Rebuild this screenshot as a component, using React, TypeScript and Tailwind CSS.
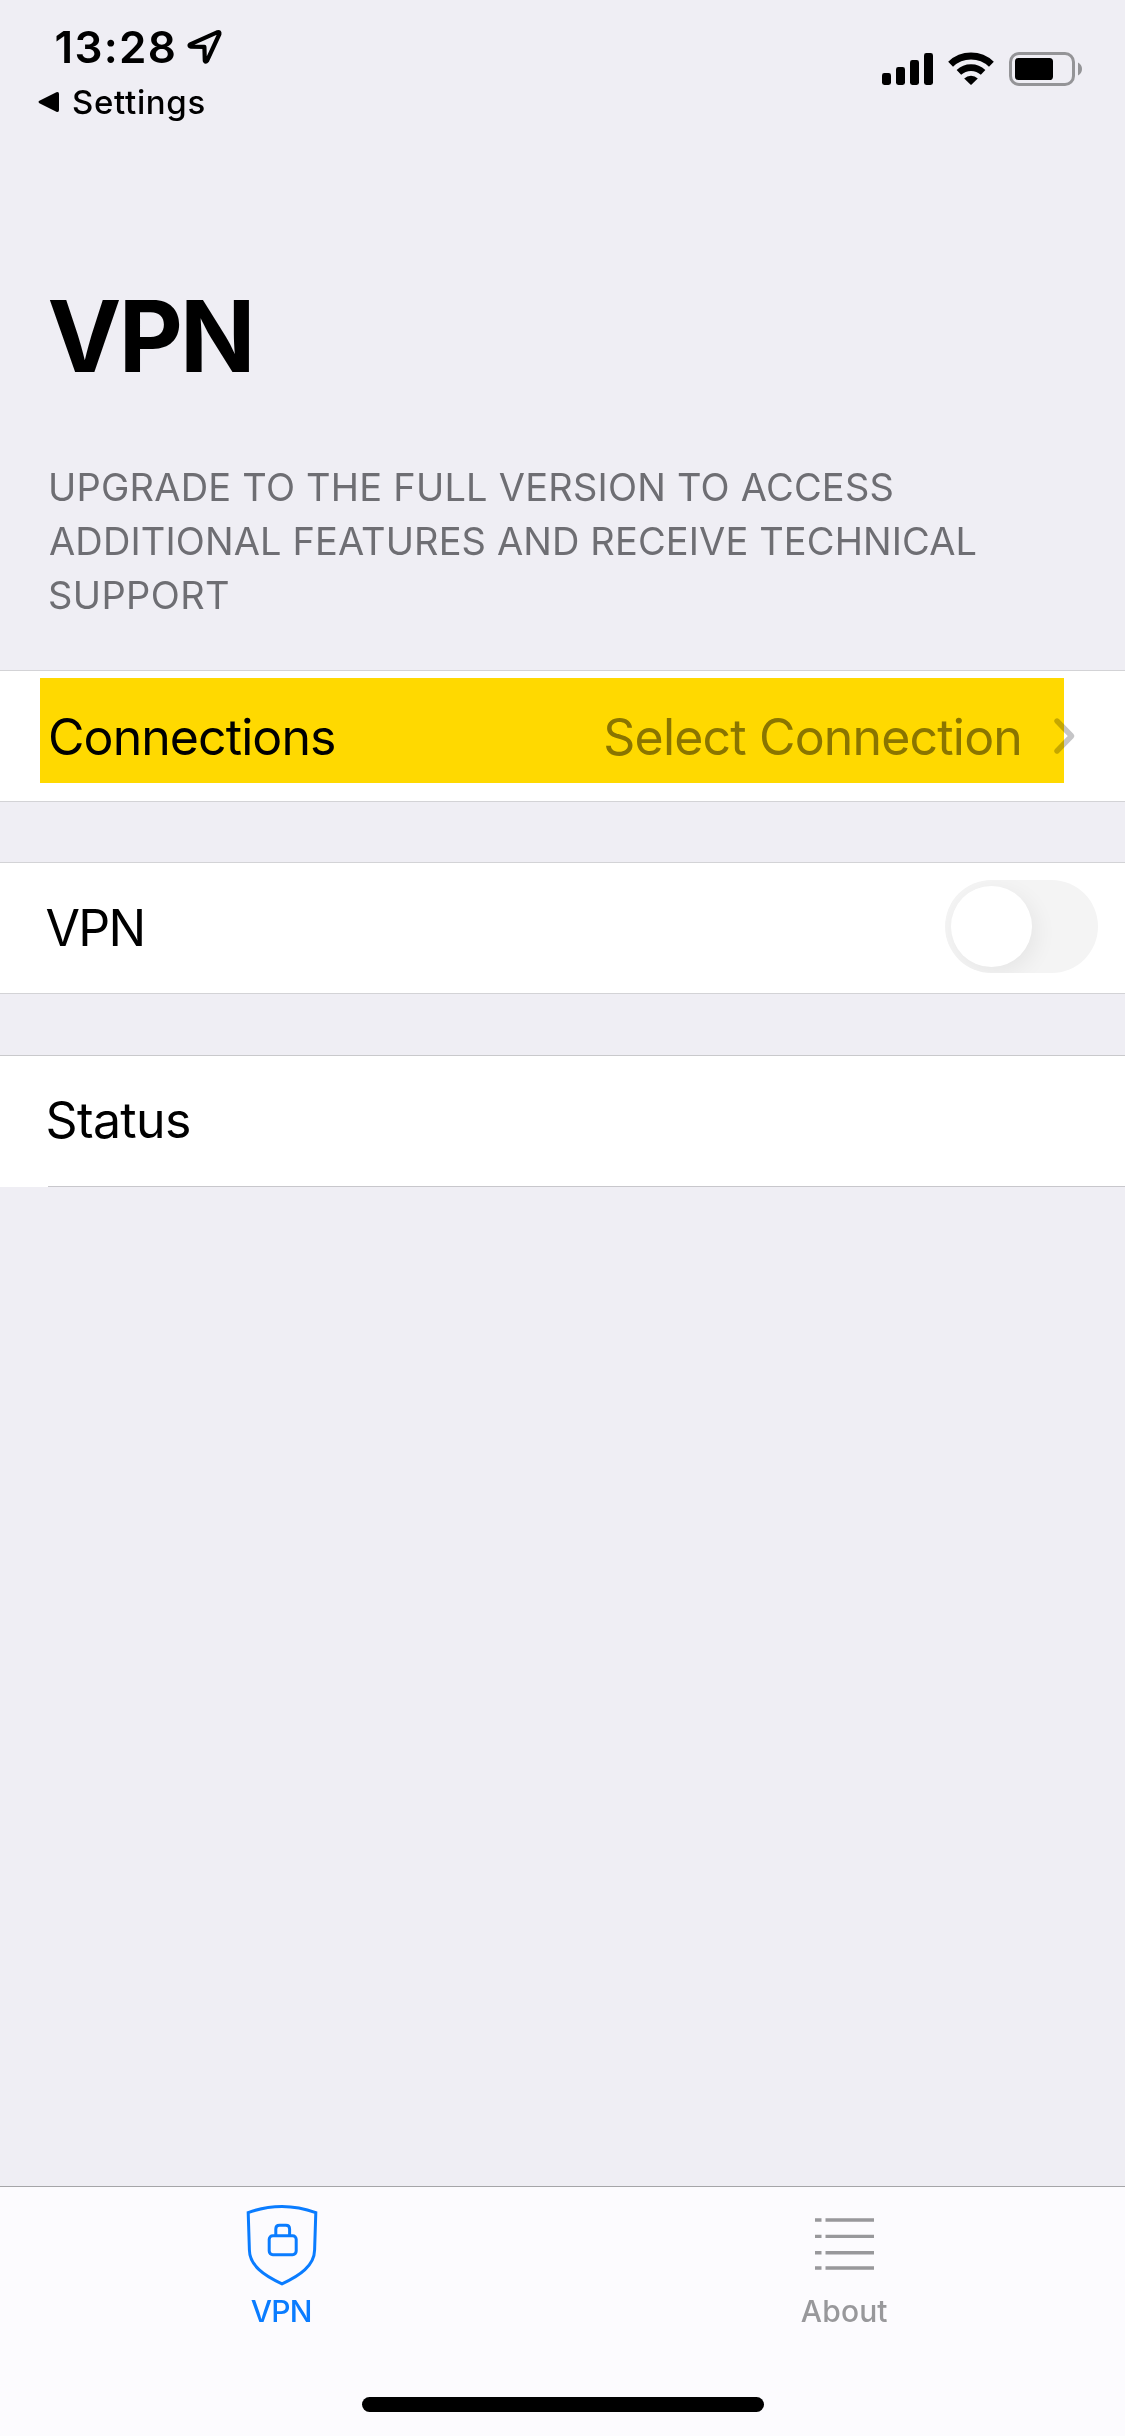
import type { ReactNode } from "react";

function LocationArrow() {
  return (
    <svg className="block" width="38" height="38" viewBox="0 0 38 38" fill="none">
      <path
        d="M31.6 4.2 L4.2 16.4 Q2.6 17.8 4.6 18.6 L18.4 18.8 L18.8 32.6 Q19.6 34.6 21 32.8 L33.4 6 Q33.8 3.4 31.6 4.2 Z"
        stroke="#000"
        strokeWidth="4.2"
        strokeLinejoin="round"
      />
    </svg>
  );
}

function SignalBars() {
  return (
    <svg className="block" width="51" height="34" viewBox="0 0 51 34">
      <rect x="0" y="21" width="9" height="12" rx="2.4" />
      <rect x="14" y="15" width="9" height="18" rx="2.4" />
      <rect x="28" y="8" width="9" height="25" rx="2.4" />
      <rect x="42" y="1" width="9" height="32" rx="2.4" />
    </svg>
  );
}

function Wifi() {
  return (
    <svg className="block" width="46" height="34" viewBox="0 0 46 34">
      <g fill="none" stroke="#000">
        <path d="M2.6 12.3 A29.5 29.5 0 0 1 43.4 12.3" strokeWidth="7" />
        <path d="M10.9 20.4 A17.6 17.6 0 0 1 35.1 20.4" strokeWidth="6.6" />
      </g>
      <path d="M16.2 26.4 A9.8 9.8 0 0 1 29.8 26.4 L23.6 32.6 Q23 33 22.4 32.6 Z" />
    </svg>
  );
}

function Battery() {
  return (
    <svg className="block" width="73" height="34" viewBox="0 0 73 34">
      <rect x="1.5" y="1.5" width="63" height="31" rx="8.5" fill="none" stroke="#949497" strokeWidth="3" />
      <rect x="6" y="6" width="38" height="22" rx="3.6" />
      <path d="M69 10.5 Q73 12.8 73 17 Q73 21.2 69 23.5 Z" fill="#949497" />
    </svg>
  );
}

function ShieldLock() {
  return (
    <svg className="block" width="72" height="82" viewBox="0 0 72 82" fill="none" stroke="#0a7cff" strokeWidth="3">
      <path d="M2.2 8.6 Q36 -3.8 69.8 8.6 L68.6 46 C68.4 61.5 54 71.5 36 79.8 C18 71.5 3.6 61.5 3.4 46 Z" />
      <rect x="23.2" y="31.7" width="27" height="19" rx="3.6" />
      <path d="M29.8 31.7 V25 Q29.8 21.3 33.5 21.3 H39.9 Q43.6 21.3 43.6 25 V31.7" />
    </svg>
  );
}

function ListIcon() {
  return (
    <svg className="block" width="59" height="52" viewBox="0 0 59 52" stroke="#98989b" strokeWidth="3.4">
      <path d="M0 2 H6.5 M10.5 2 H59 M0 18.4 H6.5 M10.5 18.4 H59 M0 34.8 H6.5 M10.5 34.8 H59 M0 50 H6.5 M10.5 50 H59" />
    </svg>
  );
}

function Row({ children }: { children: ReactNode }) {
  return (
    <div className="relative flex h-[132px] items-center border-y border-[#d3d3d6] bg-white text-[50px] leading-[60px]">
      {children}
    </div>
  );
}

export default function App() {
  return (
    <div className="flex h-[2436px] w-[1125px] flex-col bg-[#efeef4] font-['Inter',sans-serif] text-black">
      <header className="flex h-[276px] items-start justify-between pr-[43px]">
        <div className="flex flex-col pt-[25px]">
          <div className="flex h-[44px] items-center pl-[54.5px]">
            <span className="w-[131.5px] text-[44px] leading-[44px] font-semibold tracking-[1.3px]">13:28</span>
            <LocationArrow />
          </div>
          <div className="mt-[13px] flex items-center pl-[38px]">
            <svg className="block" width="22" height="22" viewBox="0 0 22 22">
              <path d="M1.4 9.8 L18.4 1.2 Q21 0.4 21 3 V19 Q21 21.6 18.4 20.8 L1.4 12.2 Q-0.4 11 1.4 9.8 Z" />
            </svg>
            <span className="ml-[12px] text-[33px] leading-[40px] font-medium tracking-[0.66px]">Settings</span>
          </div>
        </div>
        <div className="flex items-center pt-[52px]">
          <SignalBars />
          <span className="ml-[15px]">
            <Wifi />
          </span>
          <span className="ml-[15px]">
            <Battery />
          </span>
        </div>
      </header>

      <h1 className="pl-[47.5px] text-[99px] leading-[120px] font-bold tracking-[-2.78px]">VPN</h1>

      <p className="mt-16 h-[162px] pl-[48px] text-[38px] leading-[54px] whitespace-nowrap text-[#6e6e73]">
        <span className="block tracking-[0.22px]">UPGRADE TO THE FULL VERSION TO ACCESS</span>
        <span className="block pl-px tracking-[0.12px]">ADDITIONAL FEATURES AND RECEIVE TECHNICAL</span>
        <span className="block tracking-[0.38px]">SUPPORT</span>
      </p>

      <main className="mt-12 flex flex-col">
        <Row>
          <span className="ml-[48px] pt-0.5 tracking-[-0.93px]">Connections</span>
          <span className="mr-[31px] ml-auto pt-0.5 tracking-[-0.83px] text-[#8a8a8e]">Select Connection</span>
          <svg className="mr-[49px] block" width="23" height="38" viewBox="0 0 23 38" fill="none">
            <path d="M4 4 L18.6 19 L4 34" stroke="#c5c5c7" strokeWidth="5.4" strokeLinecap="round" strokeLinejoin="round" />
          </svg>
          <div className="absolute top-[7px] left-[40px] h-[105px] w-[1024px] bg-[#ffd900] mix-blend-multiply" />
        </Row>

        <div className="mt-[60px]">
          <Row>
            <span className="ml-[45.5px] tracking-[-1.7px]">VPN</span>
            <div className="mr-[27px] mb-[3px] ml-auto flex h-[93px] w-[153px] items-center overflow-hidden rounded-full bg-[#f4f4f4] pl-[6px]">
              <div className="size-[81px] rounded-full bg-white shadow-[5px_6px_22px_rgba(0,0,20,0.06)]" />
            </div>
          </Row>
        </div>

        <div className="mt-[61px] flex h-[132px] flex-col border-t border-[#c9c9cc] bg-white text-[50px] leading-[60px]">
          <div className="flex flex-1 items-center pb-0.5 pl-[45.5px] tracking-[-0.64px]">Status</div>
          <div className="ml-[48px] h-px bg-[#c8c7cc]" />
        </div>
      </main>

      <nav className="mt-auto flex h-[250px] flex-col border-t border-[#a5a5a8] bg-[#fcfbfe]">
        <div className="flex text-[30px] leading-[36px] font-medium">
          <div className="flex flex-1 flex-col items-center pt-[17px] text-[#0a7cff]">
            <div className="pl-[2px]">
              <ShieldLock />
            </div>
            <span className="mt-[7px] tracking-[-0.76px]">VPN</span>
          </div>
          <div className="flex flex-1 flex-col items-center pt-[31px] text-[#98989b]">
            <div className="pl-[2px]">
              <ListIcon />
            </div>
            <span className="mt-[23px] pl-px tracking-[0.13px]">About</span>
          </div>
        </div>
        <div className="mx-auto mt-auto mb-6 h-[15px] w-[402px] rounded-full bg-black" />
      </nav>
    </div>
  );
}
